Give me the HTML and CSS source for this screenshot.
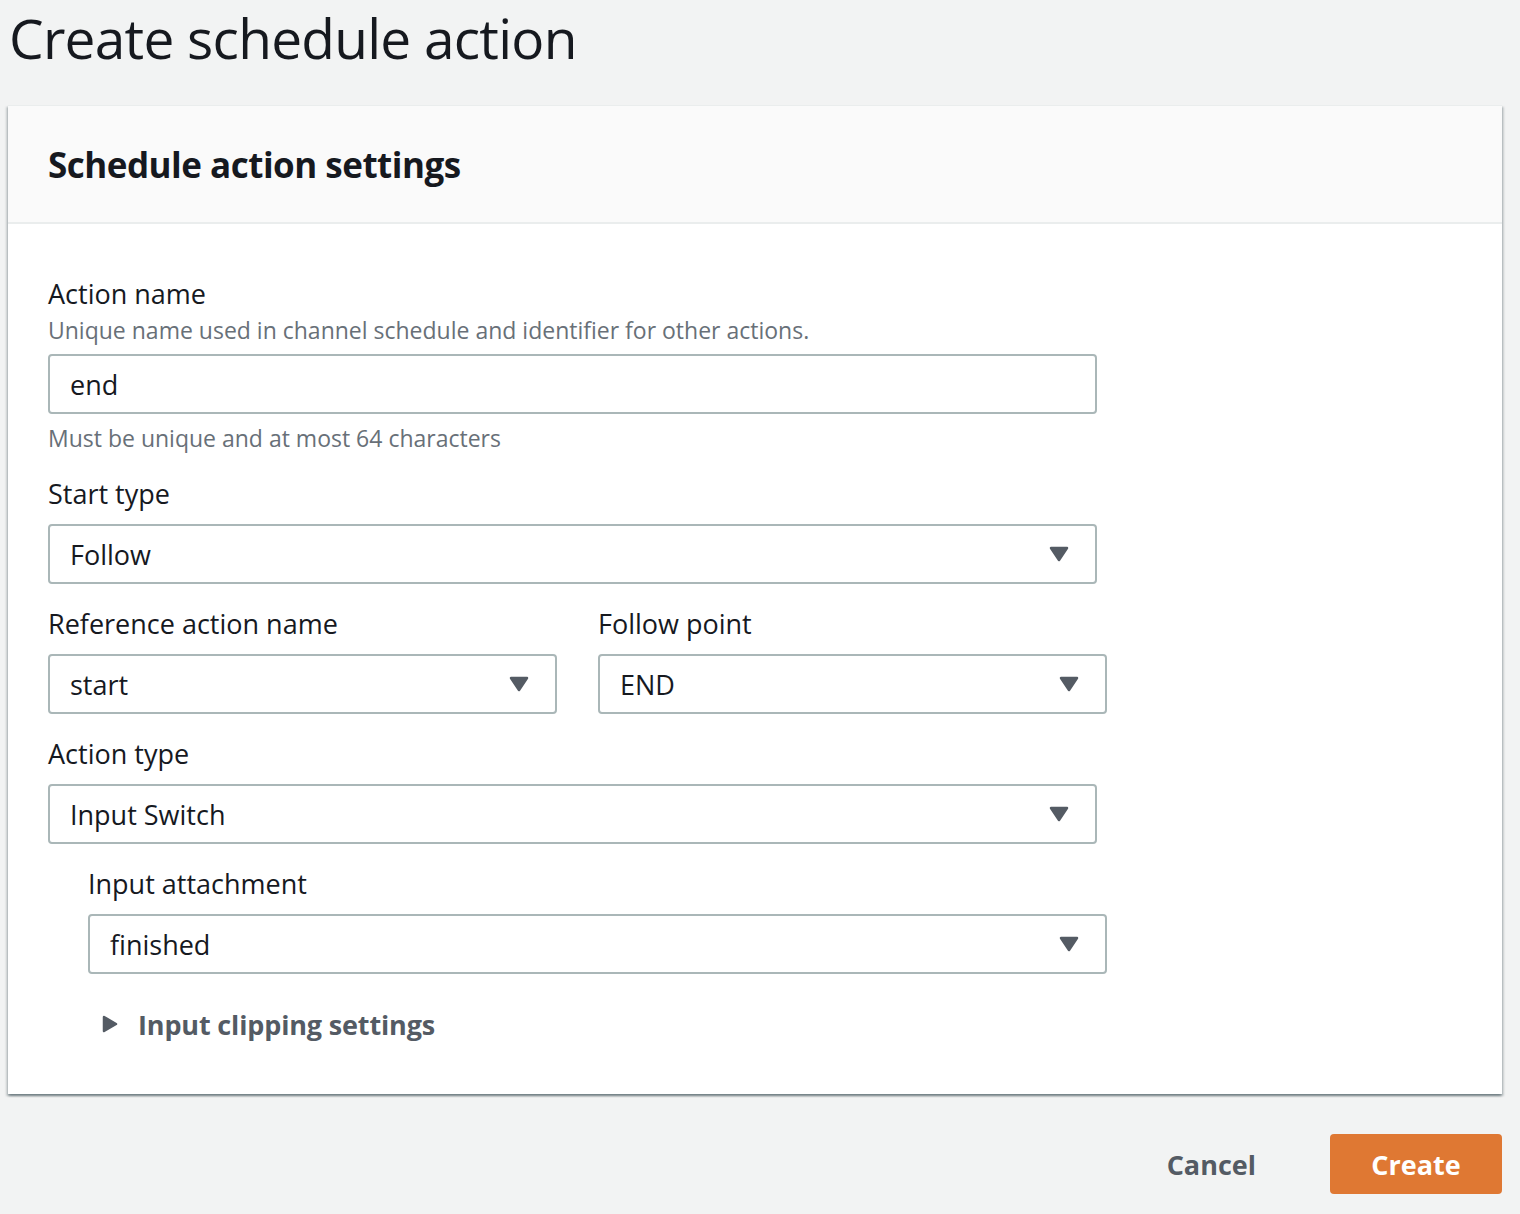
FILE: index.html
```html
<!DOCTYPE html>
<html lang="en">
<head>
<meta charset="utf-8">
<title>Create schedule action</title>
<link rel="stylesheet" href="styles.css">
</head>
<body>
<div class="page">
  <h1 class="page-title">Create schedule action</h1>

  <section class="card">
    <header class="card-header">
      <h2 class="card-title">Schedule action settings</h2>
    </header>
    <div class="card-body">
      <div class="field">
        <div class="label">Action name</div>
        <div class="description">Unique name used in channel schedule and identifier for other actions.</div>
        <div class="input">end</div>
        <div class="constraint">Must be unique and at most 64 characters</div>
      </div>

      <div class="field">
        <div class="label label-plain">Start type</div>
        <div class="select">
          <span>Follow</span>
          <svg class="caret" viewBox="0 0 20 16" width="20" height="16"><path d="M2 2 H18 L10 14 Z" fill="#545b64" stroke="#545b64" stroke-width="2.5" stroke-linejoin="round"/></svg>
        </div>
      </div>

      <div class="field row">
        <div class="col">
          <div class="label label-plain">Reference action name</div>
          <div class="select">
            <span>start</span>
            <svg class="caret" viewBox="0 0 20 16" width="20" height="16"><path d="M2 2 H18 L10 14 Z" fill="#545b64" stroke="#545b64" stroke-width="2.5" stroke-linejoin="round"/></svg>
          </div>
        </div>
        <div class="col">
          <div class="label label-plain">Follow point</div>
          <div class="select">
            <span>END</span>
            <svg class="caret" viewBox="0 0 20 16" width="20" height="16"><path d="M2 2 H18 L10 14 Z" fill="#545b64" stroke="#545b64" stroke-width="2.5" stroke-linejoin="round"/></svg>
          </div>
        </div>
      </div>

      <div class="field">
        <div class="label label-plain">Action type</div>
        <div class="select">
          <span>Input Switch</span>
          <svg class="caret" viewBox="0 0 20 16" width="20" height="16"><path d="M2 2 H18 L10 14 Z" fill="#545b64" stroke="#545b64" stroke-width="2.5" stroke-linejoin="round"/></svg>
        </div>
      </div>

      <div class="nested">
        <div class="field">
          <div class="label label-plain">Input attachment</div>
          <div class="select">
            <span>finished</span>
            <svg class="caret" viewBox="0 0 20 16" width="20" height="16"><path d="M2 2 H18 L10 14 Z" fill="#545b64" stroke="#545b64" stroke-width="2.5" stroke-linejoin="round"/></svg>
          </div>
        </div>
        <div class="expander">
          <svg class="expander-icon" viewBox="0 0 16 18" width="16" height="18"><path d="M2 2 L14 9 L2 16 Z" fill="#545b64" stroke="#545b64" stroke-width="2.5" stroke-linejoin="round"/></svg>
          <span>Input clipping settings</span>
        </div>
      </div>
    </div>
  </section>

  <div class="actions">
    <button class="btn btn-link">Cancel</button>
    <button class="btn btn-primary">Create</button>
  </div>
</div>
</body>
</html>
```

FILE: styles.css
```css
* { box-sizing: border-box; }

html, body {
  margin: 0;
  padding: 0;
  background: #f2f3f3;
}

body {
  font-family: "Open Sans", "Noto Sans", "Liberation Sans", sans-serif;
  color: #16191f;
}

.page {
  padding: 0 18px 0 8px;
}

.page-title {
  margin: 0;
  font-size: 55px;
  font-weight: 400;
  line-height: 75px;
  letter-spacing: -0.75px;
  color: #16191f;
  padding-left: 1px;
  height: 105px;
}

.card {
  background: #ffffff;
  border-top: 1px solid #eaeded;
  box-shadow: 0 2px 2px 0 rgba(0, 28, 36, 0.35),
              2px 2px 2px 0 rgba(0, 28, 36, 0.15),
              -2px 2px 2px 0 rgba(0, 28, 36, 0.15);
}

.card-header {
  background: #fafafa;
  border-bottom: 2px solid #eaeded;
  padding: 0 40px;
  height: 118px;
  display: flex;
  align-items: center;
}

.card-title {
  margin: 0;
  font-size: 35px;
  font-weight: 700;
  line-height: 44px;
  letter-spacing: -0.5px;
  color: #16191f;
  padding-top: 2px;
}

.card-body {
  padding: 50px 40px 50px 40px;
}

.field {
  margin-bottom: 20px;
  width: 1049px;
}

.label {
  font-size: 27px;
  line-height: 40px;
  color: #16191f;
}

.label-plain {
  margin-bottom: 10px;
}

.description {
  font-size: 23px;
  line-height: 32px;
  color: #687078;
  margin-bottom: 8px;
}

.input,
.select {
  height: 60px;
  border: 2px solid #aab7b8;
  border-radius: 4px;
  background: #ffffff;
  padding: 0 26px 0 20px;
  font-size: 27px;
  color: #16191f;
  display: flex;
  align-items: center;
  justify-content: space-between;
}

.constraint {
  font-size: 23px;
  line-height: 32px;
  color: #687078;
  margin-top: 8px;
}

.row {
  display: flex;
  gap: 41px;
  width: 1059px;
}

.col {
  flex: 0 0 509px;
}

.caret {
  display: block;
  flex: none;
}

.nested {
  padding-left: 40px;
}

.nested .field {
  width: 1019px;
}

.expander {
  display: flex;
  align-items: center;
  height: 40px;
  margin-top: 30px;
  padding-left: 14px;
  font-size: 27px;
  font-weight: 700;
  letter-spacing: -0.15px;
  color: #545b64;
}

.expander-icon {
  display: block;
  margin-right: 20px;
}

.actions {
  display: flex;
  justify-content: flex-end;
  align-items: center;
  gap: 32px;
  margin-top: 40px;
}

.btn {
  font-family: inherit;
  font-size: 27px;
  font-weight: 700;
  height: 60px;
  padding: 0 40px;
  border: none;
  border-radius: 4px;
  cursor: pointer;
}

.btn-link {
  background: transparent;
  color: #545b64;
  padding: 0 42px 0 38px;
}

.btn-primary {
  background: #df7833;
  color: #ffffff;
  width: 172px;
  padding: 0;
}
```
